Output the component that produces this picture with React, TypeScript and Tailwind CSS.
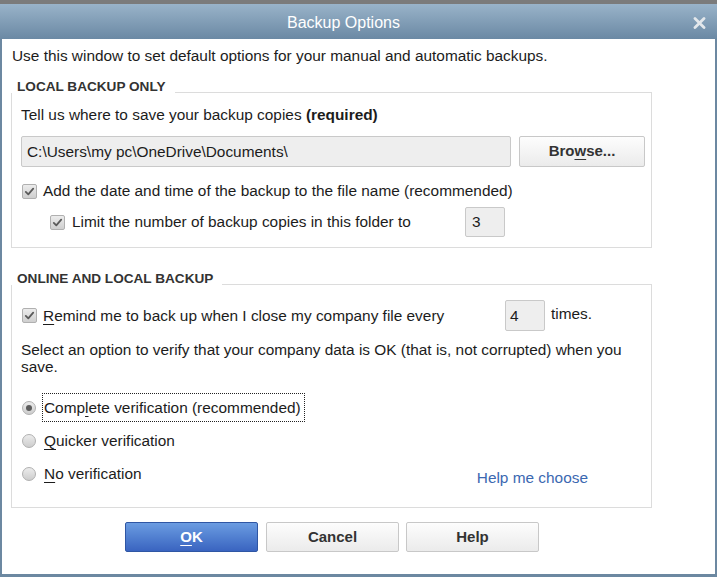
import React from 'react';

const Check = () => (
  <span className="flex-none w-[15px] h-[15px] rounded-[2px] border border-[#b0b0b0] bg-linear-to-b from-[#ececec] to-[#cfcfcf] flex items-center justify-center">
    <svg width="11" height="11" viewBox="0 0 11 11">
      <path d="M1.8 5.9 L4.3 8.3 L9.2 2.7" fill="none" stroke="#5a5a5a" strokeWidth="1.8" strokeLinecap="round" strokeLinejoin="round" />
    </svg>
  </span>
);

const Radio = ({ on }: { on?: boolean }) => (
  <span className="flex-none w-[14px] h-[14px] rounded-full border border-[#b0b0b0] bg-linear-to-b from-[#ececec] to-[#cdcdcd] flex items-center justify-center">
    {on && <span className="w-[6px] h-[6px] rounded-full bg-[#5c5c5c]" />}
  </span>
);

const U = ({ children }: { children: React.ReactNode }) => (
  <span className="underline underline-offset-[3px] decoration-1">{children}</span>
);

export default function App() {
  return (
    <div className="w-[717px] h-[577px] flex flex-col bg-[#6c88a1] font-['Liberation_Sans',Arial,sans-serif] text-[#1c1c1c] overflow-hidden">
      <div className="h-[4px] flex-none bg-[#7b7b7b]" />
      <div className="h-[35px] flex-none flex items-center bg-linear-to-b from-[#99b3c9] to-[#6b89a4]">
        <span className="ml-[287px] mt-[2px] text-white text-[16px] leading-none">Backup Options</span>
        <svg className="ml-auto mr-[11px] mt-[2px]" width="13" height="12" viewBox="0 0 13 12">
          <path d="M2 1.6 L11 10.4 M11 1.6 L2 10.4" stroke="#e3e7eb" strokeWidth="2.8" strokeLinecap="round" />
        </svg>
      </div>
      <div className="flex-1 bg-white ml-[2px] mr-[2px] mb-[3px] flex flex-col text-[15.4px]">
        <p className="mt-[8px] ml-[10px] leading-[18px] whitespace-nowrap">
          Use this window to set default options for your manual and automatic backups.
        </p>

        {/* LOCAL BACKUP ONLY */}
        <div className="mt-[15px] ml-[9px] w-[641px]">
          <div className="flex h-[13px]">
            <span className="pl-[6px] pr-[9px] text-[13.6px] leading-[13px] font-bold text-[#333]">LOCAL BACKUP ONLY</span>
            <div className="flex-1 border-b border-[#dcdcdc]" />
          </div>
          <div className="border-x border-b border-[#dcdcdc] pl-[9px] pt-[13px] pb-[10px]">
            <p className="leading-[18px] whitespace-nowrap">
              Tell us where to save your backup copies <span className="font-bold">(required)</span>
            </p>
            <div className="mt-[12px] flex gap-[8px]">
              <div className="w-[490px] h-[31px] rounded-[2px] border border-[#c9c9c9] bg-[#eeeeee] flex items-center pl-[5px] whitespace-nowrap">
                C:\Users\my pc\OneDrive\Documents\
              </div>
              <div className="w-[126px] h-[31px] rounded-[2px] border border-[#c8c8c8] bg-linear-to-b from-[#fdfdfd] to-[#ebebeb] flex items-center justify-center text-[15px] font-bold text-[#333]">
                <span>Bro<U>w</U>se...</span>
              </div>
            </div>
            <div className="mt-[15px] h-[18px] flex items-center pl-[1px] gap-[6px]">
              <Check />
              <span className="whitespace-nowrap leading-[18px]">Add the date and time of the backup to the file name (recommended)</span>
            </div>
            <div className="mt-[7px] h-[30px] flex items-center pl-[29px]">
              <Check />
              <span className="ml-[7px] w-[393px] whitespace-nowrap leading-[18px]">Limit the number of backup copies in this folder to</span>
              <div className="w-[40px] h-[30px] rounded-[2px] border border-[#c9c9c9] bg-[#eeeeee] flex items-center pl-[6px]">3</div>
            </div>
          </div>
        </div>

        {/* ONLINE AND LOCAL BACKUP */}
        <div className="mt-[24px] ml-[9px] w-[641px]">
          <div className="flex h-[13px]">
            <span className="pl-[6px] pr-[9px] text-[13.6px] leading-[13px] font-bold text-[#333]">ONLINE AND LOCAL BACKUP</span>
            <div className="flex-1 border-b border-[#dcdcdc]" />
          </div>
          <div className="border-x border-b border-[#dcdcdc] pl-[9px] pt-[15px] pb-[19px]">
            <div className="h-[31px] flex items-center pl-[1px]">
              <Check />
              <span className="ml-[6px] w-[462px] whitespace-nowrap leading-[18px]">
                <U>R</U>emind me to back up when I close my company file every
              </span>
              <div className="w-[40px] h-[31px] rounded-[2px] border border-[#c9c9c9] bg-[#eeeeee] flex items-center pl-[4px]">4</div>
              <span className="ml-[6px] leading-[18px] -mt-[3px]">times.</span>
            </div>
            <p className="mt-[10px] leading-[17px] whitespace-nowrap">
              Select an option to verify that your company data is OK (that is, not corrupted) when you
              <br />
              save.
            </p>
            <div className="mt-[18px] h-[29px] flex items-center pl-[1px]">
              <Radio on />
              <span className="ml-[6px] w-[263px] h-[29px] border border-dotted border-[#222] pl-[1px] flex items-center whitespace-nowrap">
                <span>Comp<U>l</U>ete verification (recommended)</span>
              </span>
            </div>
            <div className="mt-[4px] h-[29px] flex items-center pl-[1px]">
              <Radio />
              <span className="ml-[8px] whitespace-nowrap">
                <U>Q</U>uicker verification
              </span>
            </div>
            <div className="mt-[4px] h-[29px] flex items-center pl-[1px]">
              <Radio />
              <span className="ml-[8px] whitespace-nowrap">
                <U>N</U>o verification
              </span>
              <span className="ml-auto mr-[63px] self-end leading-[20px] text-[#3b68b1] whitespace-nowrap">Help me choose</span>
            </div>
          </div>
        </div>

        {/* Buttons */}
        <div className="mt-[14px] ml-[123px] flex">
          <div className="w-[133px] h-[30px] rounded-[2px] border border-[#2f56a4] bg-linear-to-b from-[#6b9ce1] to-[#3a64c0] flex items-center justify-center text-white text-[15px] font-bold">
            <span><U>O</U>K</span>
          </div>
          <div className="ml-[8px] w-[133px] h-[30px] rounded-[2px] border border-[#c8c8c8] bg-linear-to-b from-[#fdfdfd] to-[#ebebeb] flex items-center justify-center text-[#333] text-[15px] font-bold">
            Cancel
          </div>
          <div className="ml-[7px] w-[133px] h-[30px] rounded-[2px] border border-[#c8c8c8] bg-linear-to-b from-[#fdfdfd] to-[#ebebeb] flex items-center justify-center text-[#333] text-[15px] font-bold">
            Help
          </div>
        </div>
      </div>
    </div>
  );
}
